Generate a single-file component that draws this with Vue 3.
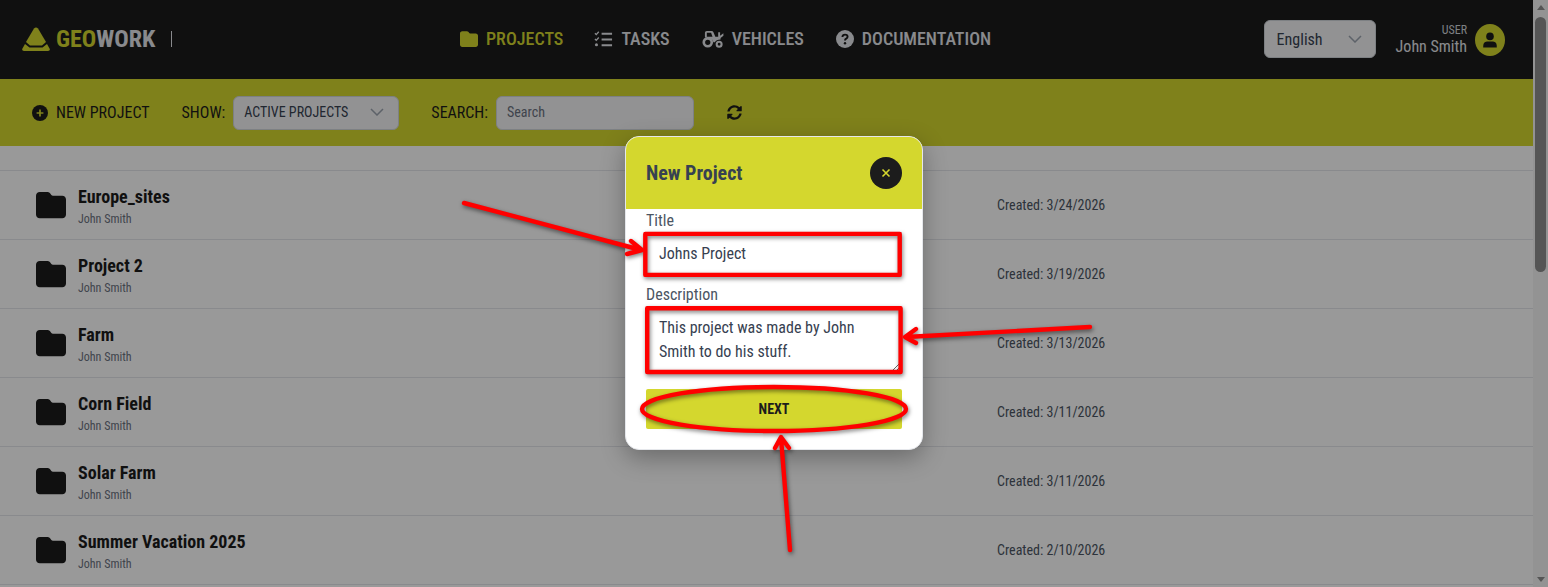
<template>
  <div class="page">
    <div class="main">
      <header class="topbar">
        <div class="brand">
          <svg class="logo" viewBox="0 0 28 25">
            <path d="M12 1.5 Q14 -0.5 16 1.5 L24 15 L20 18.6 H8 L4 15 Z" fill="#d4d72e" />
            <path d="M3 17 L7.5 20.6 H20.5 L25 17 L27.8 22 Q28.2 24 26 24 H2 Q-0.2 24 0.2 22 Z" fill="#d4d72e" />
          </svg>
          <span class="brand-name"><span class="geo">GEO</span>WORK</span>
          <span class="brand-sep"></span>
        </div>
        <nav class="nav">
          <a v-for="item in navItems" :key="item.label" class="nav-item" :class="{ active: item.active }">
            <svg v-if="item.icon === 'folder'" class="nav-icon folder-nav" viewBox="0 0 512 512">
              <path fill="currentColor" :d="folderPath" />
            </svg>
            <svg v-else-if="item.icon === 'tasks'" class="nav-icon tasks" viewBox="0 0 20 18">
              <path d="M1 3 L2.4 4.4 L5 1.4 M1 9 L2.4 10.4 L5 7.4" fill="none" stroke="currentColor" stroke-width="1.4" />
              <circle cx="2.6" cy="15" r="1.6" fill="currentColor" />
              <path d="M8 3.5 H19 M8 9.5 H19 M8 15.5 H19" stroke="currentColor" stroke-width="2" />
            </svg>
            <svg v-else-if="item.icon === 'tractor'" class="nav-icon tractor" viewBox="0 0 24 19">
              <path fill="currentColor" d="M4 8 V3 Q4 1 6 1 H11 Q12.4 1 13 2.4 L15 7 H18 V2.5 H20 V6 L23.5 3.5 V6 L20.5 8.5 V10 Q16 10 14.5 13 H13 Q12 8.5 7 8.2 Z" />
              <path fill="#1c1c1c" d="M6 7 V3 H10.5 L12 7 Z" />
              <circle cx="7" cy="13" r="4.2" fill="none" stroke="currentColor" stroke-width="2.8" />
              <circle cx="19" cy="15" r="2.6" fill="none" stroke="currentColor" stroke-width="2.2" />
            </svg>
            <svg v-else class="nav-icon help" viewBox="0 0 18 18">
              <circle cx="9" cy="9" r="9" fill="currentColor" />
              <path d="M6.4 7 Q6.6 4.6 9 4.6 Q11.6 4.6 11.6 6.8 Q11.6 8 10.2 8.7 Q9 9.3 9 10.6" fill="none" stroke="#1c1c1c" stroke-width="1.9" />
              <circle cx="9" cy="13.2" r="1.2" fill="#1c1c1c" />
            </svg>
            <span>{{ item.label }}</span>
          </a>
        </nav>
        <div class="account">
          <div class="lang">
            <span>English</span>
            <svg class="chevron" viewBox="0 0 14 8"><path d="M1 1 L7 7 L13 1" /></svg>
          </div>
          <div class="user">
            <span class="user-role">USER</span>
            <span class="user-name">John Smith</span>
          </div>
          <div class="avatar">
            <svg viewBox="0 0 16 16">
              <circle cx="8" cy="4.4" r="3.8" />
              <path d="M1.2 15.6 Q0.8 9.6 5 9.6 H11 Q15.2 9.6 14.8 15.6 Z" />
            </svg>
          </div>
        </div>
      </header>

      <section class="toolbar">
        <button class="new-btn">
          <svg class="plus" viewBox="0 0 16 16">
            <circle cx="8" cy="8" r="8" fill="#1c1c1c" />
            <path d="M8 4.6 V11.4 M4.6 8 H11.4" stroke="#d4d72e" stroke-width="1.7" />
          </svg>
          NEW PROJECT
        </button>
        <label class="tool-label show-label">SHOW:</label>
        <div class="filter">
          <span>ACTIVE PROJECTS</span>
          <svg class="chevron" viewBox="0 0 14 8"><path d="M1 1 L7 7 L13 1" /></svg>
        </div>
        <label class="tool-label search-label">SEARCH:</label>
        <input class="search" placeholder="Search" />
        <svg class="refresh" viewBox="0 0 512 512">
          <path fill="#1c1c1c" d="M370.72 133.28C339.458 104.008 298.888 87.962 255.848 88c-77.458.068-144.328 53.178-162.791 126.85-1.344 5.363-6.122 9.15-11.651 9.15H24.103c-7.498 0-13.194-6.807-11.807-14.176C33.933 94.924 134.813 8 256 8c66.448 0 126.791 26.136 171.315 68.685L463.03 40.97C478.149 25.851 504 36.559 504 57.941V192c0 13.255-10.745 24-24 24H345.941c-21.382 0-32.09-25.851-16.971-40.971l41.75-41.749zM32 296h134.059c21.382 0 32.09 25.851 16.971 40.971l-41.75 41.75c31.262 29.273 71.835 45.319 114.876 45.28 77.418-.07 144.315-53.144 162.787-126.849 1.344-5.363 6.122-9.15 11.651-9.15h57.304c7.498 0 13.194 6.807 11.807 14.176C478.067 417.076 377.187 504 256 504c-66.448 0-126.791-26.136-171.315-68.685L48.97 471.03C33.851 486.149 8 475.441 8 454.059V320c0-13.255 10.745-24 24-24z" />
        </svg>
      </section>

      <ul class="projects">
        <li v-for="project in projects" :key="project.name" class="project">
          <svg class="project-icon" viewBox="0 0 512 512">
            <path fill="#1c1c1c" :d="folderPath" />
          </svg>
          <div class="project-info">
            <span class="project-name">{{ project.name }}</span>
            <span class="project-owner">John Smith</span>
          </div>
          <span class="project-date">Created: {{ project.created }}</span>
        </li>
      </ul>
    </div>

    <div class="scrollbar">
      <span class="arrow-up"></span>
      <span class="thumb"></span>
      <span class="arrow-down"></span>
    </div>

    <div class="overlay"></div>

    <form class="modal" @submit.prevent>
      <div class="modal-head">
        <h2>New Project</h2>
        <button class="close" type="button">
          <svg viewBox="0 0 10 10"><path d="M1.5 1.5 L8.5 8.5 M8.5 1.5 L1.5 8.5" /></svg>
        </button>
      </div>
      <div class="modal-body">
        <label class="field-label">Title</label>
        <input class="field" value="Johns Project" />
        <label class="field-label desc-label">Description</label>
        <textarea class="field area" v-model="description"></textarea>
        <button class="next" type="submit">NEXT</button>
      </div>
    </form>

    <svg class="marks" viewBox="0 0 1548 587">
      <g class="mark-lines">
        <rect x="645.3" y="233.9" width="254.4" height="41" />
        <rect x="647.2" y="308.2" width="253.4" height="63.8" />
        <ellipse cx="774" cy="409" rx="132" ry="22" />
        <path d="M464 203 L641 250 M631 241 L642 250 L627 254" />
        <path d="M1090 327 L906 337 M916 329 L905 337 L916 343" />
        <path d="M790 550 L781 438 M775 448 L781 437 L789 448" />
      </g>
    </svg>
  </div>
</template>

<script setup>
import { ref } from 'vue'

const folderPath =
  'M64 480H448c35.3 0 64-28.7 64-64V160c0-35.3-28.7-64-64-64H288c-10.1 0-19.6-4.7-25.6-12.8L243.2 57.6C231.1 41.5 212.1 32 192 32H64C28.7 32 0 60.7 0 96V416c0 35.3 28.7 64 64 64z'

const navItems = [
  { label: 'PROJECTS', icon: 'folder', active: true },
  { label: 'TASKS', icon: 'tasks' },
  { label: 'VEHICLES', icon: 'tractor' },
  { label: 'DOCUMENTATION', icon: 'help' },
]

const projects = [
  { name: 'Europe_sites', created: '3/24/2026' },
  { name: 'Project 2', created: '3/19/2026' },
  { name: 'Farm', created: '3/13/2026' },
  { name: 'Corn Field', created: '3/11/2026' },
  { name: 'Solar Farm', created: '3/11/2026' },
  { name: 'Summer Vacation 2025', created: '2/10/2026' },
]

const description = ref('This project was made by John Smith to do his stuff.')
</script>

<style>
html,
body {
  margin: 0;
  overflow: hidden;
}
</style>

<style scoped>
.page {
  position: relative;
  display: flex;
  width: 1548px;
  height: 587px;
  overflow: hidden;
  background: #fff;
  font-family: Roboto, 'Liberation Sans', sans-serif;
  font-stretch: 75%;
  color: #1c1c1c;
}

.main {
  flex: 1;
  min-width: 0;
}

.topbar {
  display: flex;
  align-items: center;
  height: 79px;
  padding: 0 28px 0 22px;
  box-sizing: border-box;
  background: #1c1c1c;
}

.brand {
  display: flex;
  align-items: center;
  width: 150px;
  margin-bottom: 1px;
}

.logo {
  width: 28px;
  height: 25px;
  margin-right: 6px;
}

.brand-name {
  font-size: 24px;
  font-weight: 700;
  color: #e5e7eb;
}

.geo {
  color: #d4d72e;
}

.brand-sep {
  width: 1px;
  height: 16px;
  margin-left: auto;
  background: #e5e7eb;
}

.nav {
  display: flex;
  align-items: center;
  gap: 31px;
  margin-left: 288px;
  margin-bottom: 2px;
}

.nav-item {
  display: flex;
  align-items: center;
  gap: 8px;
  font-size: 18px;
  font-weight: 500;
  color: #e5e7eb;
}

.nav-item.active {
  color: #d4d72e;
}

.nav-icon {
  width: 19px;
  height: 18px;
}

.folder-nav {
  width: 18px;
}

.tasks {
  width: 19px;
}

.tractor {
  width: 23px;
}

.help {
  width: 18px;
  margin-left: 1px;
}

.account {
  display: flex;
  align-items: center;
  margin-left: auto;
}

.lang {
  display: flex;
  align-items: center;
  justify-content: space-between;
  width: 112px;
  height: 38px;
  margin-bottom: 1px;
  padding: 0 13px 0 12px;
  box-sizing: border-box;
  border: 1px solid #d1d5db;
  border-radius: 6px;
  background: #f3f4f6;
  font-size: 16px;
  color: #374151;
}

.chevron {
  width: 14px;
  height: 8px;
  fill: none;
  stroke: #9ca3af;
  stroke-width: 1.5;
}

.user {
  display: flex;
  flex-direction: column;
  align-items: flex-end;
  margin-left: 20px;
  color: #e5e7eb;
}

.user-role {
  font-size: 12px;
  line-height: 14px;
  color: #d1d5db;
}

.user-name {
  font-size: 16px;
  line-height: 20px;
}

.avatar {
  display: flex;
  align-items: center;
  justify-content: center;
  width: 30px;
  height: 32px;
  margin-left: 8px;
  border-radius: 50%;
  background: #d4d72e;
}

.avatar svg {
  width: 16px;
  height: 16px;
  fill: #1c1c1c;
}

.toolbar {
  display: flex;
  align-items: center;
  height: 67px;
  padding-left: 32px;
  background: #d4d72e;
}

.new-btn {
  display: flex;
  align-items: center;
  gap: 8px;
  padding: 0;
  border: 0;
  background: none;
  font: inherit;
  font-size: 16px;
  color: #1c1c1c;
}

.plus {
  width: 16px;
  height: 16px;
}

.tool-label {
  font-size: 16px;
}

.show-label {
  margin-left: 32px;
}

.filter {
  display: flex;
  align-items: center;
  justify-content: space-between;
  width: 166px;
  height: 34px;
  margin-left: 8px;
  padding: 0 14px 1px 10px;
  box-sizing: border-box;
  border: 1px solid #d1d5db;
  border-radius: 6px;
  background: #f3f4f6;
  font-size: 14px;
  color: #374151;
}

.search-label {
  margin-left: 32px;
}

.search {
  width: 198px;
  height: 34px;
  margin-left: 8px;
  padding: 0 10px 1px;
  box-sizing: border-box;
  border: 1px solid #d1d5db;
  border-radius: 6px;
  background: #f3f4f6;
  font: inherit;
  font-size: 14px;
}

.search::placeholder {
  color: #6b7280;
}

.refresh {
  width: 15px;
  height: 15px;
  margin-left: 33px;
}

.projects {
  margin: 24px 0 0;
  padding: 0;
  list-style: none;
  border-top: 1px solid #e5e7eb;
}

.project {
  display: flex;
  align-items: center;
  height: 68px;
  padding-left: 36px;
  border-bottom: 1px solid #e5e7eb;
}

.project-icon {
  width: 30px;
  height: 30px;
}

.project-info {
  display: flex;
  flex-direction: column;
  width: 919px;
  margin-left: 12px;
  padding-top: 3px;
}

.project-name {
  font-size: 18px;
  font-weight: 700;
  line-height: 24px;
  color: #1c1c1c;
}

.project-owner {
  margin-top: 1px;
  font-size: 12px;
  line-height: 18px;
  color: #6b7280;
}

.project-date {
  font-size: 14px;
  color: #4b5563;
}

.scrollbar {
  position: relative;
  display: flex;
  flex-direction: column;
  align-items: center;
  width: 15px;
  background: #f5f5f5;
}

.arrow-up,
.arrow-down {
  width: 0;
  height: 0;
  border-left: 4.5px solid transparent;
  border-right: 4.5px solid transparent;
}

.arrow-up {
  margin-top: 5px;
  border-bottom: 5px solid #8e8e8e;
}

.arrow-down {
  margin-top: auto;
  margin-bottom: 5px;
  border-top: 5px solid #8e8e8e;
}

.thumb {
  width: 11px;
  height: 255px;
  margin-top: 7px;
  border-radius: 6px;
  background: #8e8e8e;
}

.overlay {
  position: absolute;
  inset: 0;
  background: rgba(0, 0, 0, 0.4);
}

.modal {
  position: absolute;
  left: 625px;
  top: 136px;
  width: 298px;
  height: 314px;
  box-sizing: border-box;
  overflow: hidden;
  border: 1px solid #e5e7eb;
  border-radius: 14px;
  background: #fff;
  box-shadow: 0 8px 24px rgba(0, 0, 0, 0.3);
}

.modal-head {
  display: flex;
  align-items: center;
  justify-content: space-between;
  height: 72px;
  padding: 0 20px;
  background: #d4d72e;
}

.modal-head h2 {
  margin: 0;
  font-size: 20px;
  font-weight: 700;
  color: #374151;
}

.close {
  display: flex;
  align-items: center;
  justify-content: center;
  width: 32px;
  height: 32px;
  padding: 0;
  border: 0;
  border-radius: 50%;
  background: #1c1c1c;
}

.close svg {
  width: 10px;
  height: 10px;
  fill: none;
  stroke: #d4d72e;
  stroke-width: 1.6;
}

.modal-body {
  display: flex;
  flex-direction: column;
  padding: 1px 20px 0;
}

.field-label {
  font-size: 16px;
  line-height: 22px;
  color: #4b5563;
}

.field {
  height: 43px;
  padding: 0 12px;
  box-sizing: border-box;
  border: 1px solid #d1d5db;
  background: #fff;
  font: inherit;
  font-size: 16px;
  color: #374151;
  outline: none;
}

.desc-label {
  margin-top: 9px;
}

.area {
  height: 66px;
  padding: 9px 12px 0;
  line-height: 24px;
  resize: vertical;
}

.next {
  height: 40px;
  margin-top: 17px;
  border: 0;
  border-radius: 2px;
  background: #d4d72e;
  font: inherit;
  font-size: 14px;
  font-weight: 700;
  color: #1c1c1c;
}

.marks {
  position: absolute;
  inset: 0;
  width: 1548px;
  height: 587px;
  pointer-events: none;
}

.mark-lines {
  fill: none;
  stroke: #f00;
  stroke-width: 4.4;
  stroke-linecap: round;
  stroke-linejoin: round;
  filter: drop-shadow(1px 2px 2px rgba(0, 0, 0, 0.5));
}
</style>
